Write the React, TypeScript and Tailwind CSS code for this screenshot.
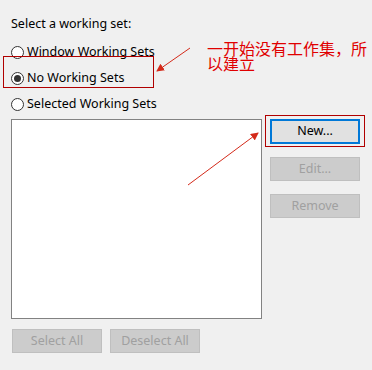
export default function App() {
  const options = ['Window Working Sets', 'No Working Sets', 'Selected Working Sets'];
  const selected = 1;

  return (
    <div
      className="relative w-[372px] h-[370px] overflow-hidden bg-[#f0f0f0] text-[12.5px] text-black"
      style={{ fontFamily: '"Noto Sans", "Liberation Sans", sans-serif' }}
    >
      <div className="flex flex-col pl-[11px] pt-[15px]">
        <div className="h-[18px] leading-[18px]">Select a working set:</div>

        {/* radio options */}
        <div className="flex flex-col mt-[6px]">
          {options.map((o, i) => (
            <label key={o} className="flex items-center h-[26px] gap-[3px]">
              <span className="w-[13px] h-[13px] rounded-full border border-[#333] bg-white flex items-center justify-center">
                {i === selected && <span className="w-[7px] h-[7px] rounded-full bg-[#333]" />}
              </span>
              <span className="leading-[18px]">{o}</span>
            </label>
          ))}
        </div>

        {/* list + side buttons */}
        <div className="flex mt-[2px] gap-[8px]">
          <div className="w-[251px] h-[200px] bg-white border border-[#828282]" />
          <div className="flex flex-col gap-[13px]">
            <button className="w-[90px] h-[25px] bg-[#e1e1e1] border-2 border-[#0078d7] text-black">
              New...
            </button>
            <button className="w-[90px] h-[24px] bg-[#cccccc] border border-[#bfbfbf] text-[#a0a0a0]">
              Edit...
            </button>
            <button className="w-[90px] h-[24px] bg-[#cccccc] border border-[#bfbfbf] text-[#a0a0a0]">
              Remove
            </button>
          </div>
        </div>

        {/* bottom buttons */}
        <div className="flex gap-[8px] mt-[10px] pl-[1px]">
          <button className="w-[90px] h-[24px] bg-[#cccccc] border border-[#bfbfbf] text-[#a0a0a0]">
            Select All
          </button>
          <button className="w-[90px] h-[24px] bg-[#cccccc] border border-[#bfbfbf] text-[#a0a0a0]">
            Deselect All
          </button>
        </div>
      </div>

      {/* annotations drawn over the dialog */}
      <div className="absolute left-[3px] top-[56px] w-[151px] h-[32px] border border-[#b00000]" />
      <div className="absolute left-[265px] top-[115px] w-[100px] h-[32px] border border-[#b00000]" />
      <div
        className="absolute left-[207px] top-[41px] w-[165px] text-[16px] leading-[15px] text-[#e00000]"
        style={{ fontFamily: '"Noto Sans CJK SC", sans-serif' }}
      >
        一开始没有工作集，所以建立
      </div>
      <svg className="absolute left-0 top-0" width="372" height="370">
        <defs>
          <marker id="ah" markerWidth="8" markerHeight="8" refX="7" refY="4" orient="auto" markerUnits="userSpaceOnUse">
            <path d="M0,0 L8,4 L0,8 Z" fill="#d42a1a" />
          </marker>
        </defs>
        <line x1="190" y1="48" x2="157" y2="71" stroke="#d42a1a" strokeWidth="1" markerEnd="url(#ah)" />
        <line x1="188" y1="185" x2="258" y2="133" stroke="#d42a1a" strokeWidth="1" markerEnd="url(#ah)" />
      </svg>
    </div>
  );
}
